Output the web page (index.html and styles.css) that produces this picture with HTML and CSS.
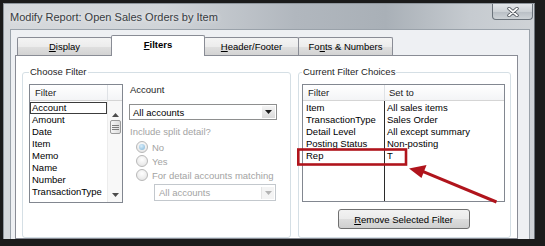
FILE: index.html
```html
<!DOCTYPE html>
<html lang="en">
<head>
    <meta charset="UTF-8">
    <meta name="viewport" content="width=device-width, initial-scale=1.0">
    <title>Modify Report: Open Sales Orders by Item</title>
    <link rel="stylesheet" href="styles.css">
</head>
<body>
    <div class="screen">
        <div class="window">
            <div class="titlebar">
                <span class="title">Modify Report: Open Sales Orders by Item</span>
                <div class="close">
                    <svg width="12" height="10" viewBox="0 0 12 10">
                        <path d="M2 1.5 L10 8.5 M10 1.5 L2 8.5" stroke="#4b5158" stroke-width="3.4" stroke-linecap="round"/>
                        <path d="M2 1.5 L10 8.5 M10 1.5 L2 8.5" stroke="#ffffff" stroke-width="1.8" stroke-linecap="round"/>
                    </svg>
                </div>
            </div>
            <div class="client">
                <div class="tabs">
                    <div class="tab"><u>D</u>isplay</div>
                    <div class="tab active"><u>F</u>ilters</div>
                    <div class="tab"><u>H</u>eader/Footer</div>
                    <div class="tab">Fo<u>n</u>ts &amp; Numbers</div>
                </div>
                <div class="panel">
                    <fieldset class="group choose">
                        <legend>Choose Filter</legend>
                        <div class="choose-body">
                            <div class="listbox">
                                <div class="lb-head"><span class="hcol">Filter</span></div>
                                <div class="lb-body">
                                    <ul class="lb-items">
                                        <li class="focus">Account</li>
                                        <li>Amount</li>
                                        <li>Date</li>
                                        <li>Item</li>
                                        <li>Memo</li>
                                        <li>Name</li>
                                        <li>Number</li>
                                        <li>TransactionType</li>
                                    </ul>
                                    <div class="scrollbar">
                                        <div class="sb-up">
                                            <svg width="7" height="4" viewBox="0 0 7 4"><path d="M0 4 L3.5 0 L7 4 Z" fill="#4d4d4d"/></svg>
                                        </div>
                                        <div class="sb-thumb">
                                            <svg width="7" height="7" viewBox="0 0 7 7"><path d="M0 1.5 H7 M0 3.5 H7 M0 5.5 H7" stroke="#7d7d7d" stroke-width="1"/></svg>
                                        </div>
                                        <div class="sb-track"></div>
                                        <div class="sb-down">
                                            <svg width="7" height="4" viewBox="0 0 7 4"><path d="M0 0 L7 0 L3.5 4 Z" fill="#4d4d4d"/></svg>
                                        </div>
                                    </div>
                                </div>
                            </div>
                            <div class="filter-opts">
                                <div class="opt-label">Account</div>
                                <div class="combo">
                                    <span class="val">All accounts</span>
                                    <span class="arrow">
                                        <svg width="7" height="4" viewBox="0 0 7 4"><path d="M0 0 L7 0 L3.5 4 Z" fill="#1e1e1e"/></svg>
                                    </span>
                                </div>
                                <div class="hint">Include split detail?</div>
                                <div class="radios">
                                    <div class="radio checked"><span class="dot"></span>No</div>
                                    <div class="radio"><span class="dot"></span>Yes</div>
                                    <div class="radio"><span class="dot"></span>For detail accounts matching</div>
                                </div>
                                <div class="combo disabled">
                                    <span class="val">All accounts</span>
                                    <span class="arrow">
                                        <svg width="7" height="4" viewBox="0 0 7 4"><path d="M0 0 L7 0 L3.5 4 Z" fill="#b4b4b4"/></svg>
                                    </span>
                                </div>
                            </div>
                        </div>
                    </fieldset>
                    <fieldset class="group current">
                        <legend>Current Filter Choices</legend>
                        <div class="listview">
                            <div class="lv-head">
                                <span class="c1">Filter</span>
                                <span class="c2">Set to</span>
                            </div>
                            <div class="lv-body">
                                <div class="lv-col c1">
                                    <div>Item</div>
                                    <div>TransactionType</div>
                                    <div>Detail Level</div>
                                    <div>Posting Status</div>
                                    <div>Rep</div>
                                </div>
                                <div class="lv-col c2">
                                    <div>All sales items</div>
                                    <div>Sales Order</div>
                                    <div>All except summary</div>
                                    <div>Non-posting</div>
                                    <div>T</div>
                                </div>
                            </div>
                        </div>
                        <div class="btn-row">
                            <button class="btn"><u>R</u>emove Selected Filter</button>
                        </div>
                    </fieldset>
                </div>
            </div>
        </div>

        <!-- red callout drawn over the dialog -->
        <svg class="annot" width="545" height="246" viewBox="0 0 545 246">
            <rect x="298.3" y="149.5" width="107.7" height="15" fill="none" stroke="#b0141c" stroke-width="2.6"/>
            <line x1="496.5" y1="202" x2="422" y2="171.2" stroke="#b0141c" stroke-width="3"/>
            <polygon points="409,168.5 426.5,165 421.5,178" fill="#b0141c"/>
        </svg>
    </div>
</body>
</html>
```

FILE: styles.css
```css
* {
    box-sizing: border-box;
}
body {
    margin: 0;
    background-color: #1b1b1b;
    font-family: "Liberation Sans", Arial, sans-serif;
    font-size: 9.5px;
    color: #000;
}
.screen {
    position: relative;
    width: 545px;
    height: 246px;
    padding: 3px 0 0 3px;
    overflow: hidden;
}
.window {
    width: 532px;
    height: 236px;
    display: flex;
    flex-direction: column;
    overflow: hidden;
    border-top: 1px solid #8f969d;
    border-left: 1px solid #8f969d;
    border-right: 1px solid #6d747b;
    background: linear-gradient(90deg, #d6d9dc 0%, #d0d4d8 30%, #b1b7be 55%, #a9b0b7 72%, #c6cbd0 88%, #cfd3d7 100%);
}
.titlebar {
    height: 25px;
    display: flex;
    align-items: center;
    padding-left: 6px;
}
.title {
    font-size: 11px;
    color: #383c41;
    text-shadow: 0 0 5px rgba(255, 255, 255, 0.9);
}
.close {
    margin-left: auto;
    margin-right: 1px;
    align-self: flex-start;
    width: 41px;
    height: 16px;
    display: flex;
    align-items: center;
    justify-content: center;
    border: 1px solid #6b737b;
    border-top: none;
    border-radius: 0 0 4px 4px;
    background: linear-gradient(#e4e7ea 0%, #cdd2d6 50%, #b8bec4 51%, #ced3d7 100%);
}
.client {
    flex: 1;
    display: flex;
    flex-direction: column;
    margin: 0 4px 0 6px;
    padding: 5px 11px 0 4px;
    background-color: #eef0f3;
    border: 1px solid #9aa2aa;
    border-bottom: none;
}
.tabs {
    position: relative;
    z-index: 1;
    display: flex;
    align-items: flex-end;
    height: 20px;
    padding-left: 2px;
}
.tab {
    width: 95px;
    height: 18px;
    margin-right: -1px;
    line-height: 17px;
    text-align: center;
    border: 1px solid #898c95;
    border-bottom: none;
    border-radius: 2px 2px 0 0;
    background: linear-gradient(#f4f4f4 0%, #ececec 50%, #dfdfdf 51%, #d3d3d3 100%);
}
.tab.active {
    position: relative;
    z-index: 2;
    width: 94px;
    height: 21px;
    margin-bottom: -1px;
    line-height: 18px;
    font-weight: bold;
    background: #fff;
}
.panel {
    flex: 1;
    display: flex;
    gap: 7px;
    padding: 10px 6px 0 6px;
    background-color: #fff;
    border: 1px solid #898c95;
}
.group {
    margin: 0;
    min-width: 0;
    border: 1px solid #d5dfe5;
    border-radius: 3px;
}
.group legend {
    padding: 0 1px;
    line-height: 12px;
    color: #1e1e1e;
}
.choose {
    width: 269px;
    padding: 6px 0 0 6px;
}
.current {
    width: 213px;
    padding: 6px 5px 7px 3px;
}
.choose-body {
    display: flex;
    gap: 6px;
}
.listbox {
    width: 94px;
    height: 119px;
    display: flex;
    flex-direction: column;
    border: 1px solid #828790;
    background-color: #fff;
}
.lb-head, .lv-head {
    display: flex;
    height: 16px;
    line-height: 15px;
    border-bottom: 1px solid #d5d5d5;
    background: linear-gradient(#ffffff, #f3f4f6);
    color: #222;
}
.lb-head .hcol {
    width: 78px;
    padding-left: 5px;
    border-right: 1px solid #dfe2e6;
}
.lb-body {
    flex: 1;
    display: flex;
}
.lb-items {
    list-style: none;
    margin: 0;
    padding: 1px 0 0;
    width: 77px;
}
.lb-items li {
    height: 12px;
    line-height: 12px;
    padding-left: 2px;
    white-space: nowrap;
}
.lb-items li.focus {
    outline: 1px solid #3c3c3c;
    outline-offset: -1px;
}
.scrollbar {
    width: 15px;
    display: flex;
    flex-direction: column;
    align-items: center;
    background-color: #f8f8f8;
    border-left: 1px solid #ececec;
}
.sb-up {
    height: 18px;
    display: flex;
    align-items: flex-end;
    padding-bottom: 2px;
}
.sb-thumb {
    width: 11px;
    height: 14px;
    margin-top: 1px;
    display: flex;
    align-items: center;
    justify-content: center;
    border: 1px solid #9a9a9a;
    border-radius: 2px;
    background: linear-gradient(90deg, #f6f6f6, #dcdcdc);
}
.sb-track {
    flex: 1;
}
.sb-down {
    height: 14px;
    display: flex;
    align-items: center;
}
.filter-opts {
    width: 148px;
    display: flex;
    flex-direction: column;
}
.opt-label {
    line-height: 12px;
    padding-left: 1px;
    color: #1e1e1e;
}
.combo {
    margin-top: 8px;
    height: 16px;
    display: flex;
    align-items: center;
    padding-left: 3px;
    border: 1px solid #8e8f8f;
    background-color: #fff;
}
.combo .val {
    flex: 1;
}
.combo .arrow {
    width: 13px;
    height: 12px;
    margin-right: 1px;
    display: flex;
    align-items: center;
    justify-content: center;
    background: linear-gradient(#f4f4f4, #dadada);
}
.combo.disabled {
    margin-top: 2px;
    margin-left: 25px;
    width: 122px;
    height: 17px;
    padding-left: 4px;
    color: #a3a3a3;
    border-color: #c3c8cd;
}
.combo.disabled .arrow {
    background: #f4f4f4;
    border-left: 1px solid #e4e4e4;
}
.hint {
    margin-top: 6px;
    line-height: 12px;
    padding-left: 1px;
    color: #a3a3a3;
}
.radios {
    margin-top: 2px;
}
.radio {
    height: 14px;
    display: flex;
    align-items: center;
    gap: 4px;
    padding-left: 7px;
    color: #a3a3a3;
    white-space: nowrap;
}
.radio .dot {
    width: 12px;
    height: 12px;
    display: flex;
    align-items: center;
    justify-content: center;
    border: 1px solid #b8b8b8;
    border-radius: 50%;
    background: radial-gradient(circle at 50% 35%, #ffffff, #e0e0e0);
}
.radio.checked .dot::after {
    content: "";
    width: 6px;
    height: 6px;
    border-radius: 50%;
    background: radial-gradient(circle at 40% 35%, #d8eefc, #7fb3d5);
}
.listview {
    width: 203px;
    height: 118px;
    display: flex;
    flex-direction: column;
    border: 1px solid #828790;
    background-color: #fff;
}
.lv-head .c1 {
    width: 82px;
    padding-left: 5px;
    border-right: 1px solid #dfe2e6;
}
.lv-head .c2 {
    padding-left: 4px;
}
.lv-body {
    flex: 1;
    display: flex;
}
.lv-col {
    padding-top: 1px;
}
.lv-col div {
    height: 12px;
    line-height: 12px;
    white-space: nowrap;
}
.lv-col.c1 {
    width: 82px;
    padding-left: 3px;
    border-right: 1px solid #2b2b2b;
}
.lv-col.c2 {
    flex: 1;
    padding-left: 2px;
}
.btn-row {
    display: flex;
    justify-content: center;
    margin-top: 7px;
}
.btn {
    width: 132px;
    height: 20px;
    padding: 0;
    font: inherit;
    color: #000;
    border: 1px solid #707070;
    border-radius: 3px;
    background: linear-gradient(#f2f2f2 0%, #ebebeb 50%, #dddddd 51%, #cfcfcf 100%);
}
.annot {
    position: absolute;
    left: 0;
    top: 0;
    pointer-events: none;
}
```
